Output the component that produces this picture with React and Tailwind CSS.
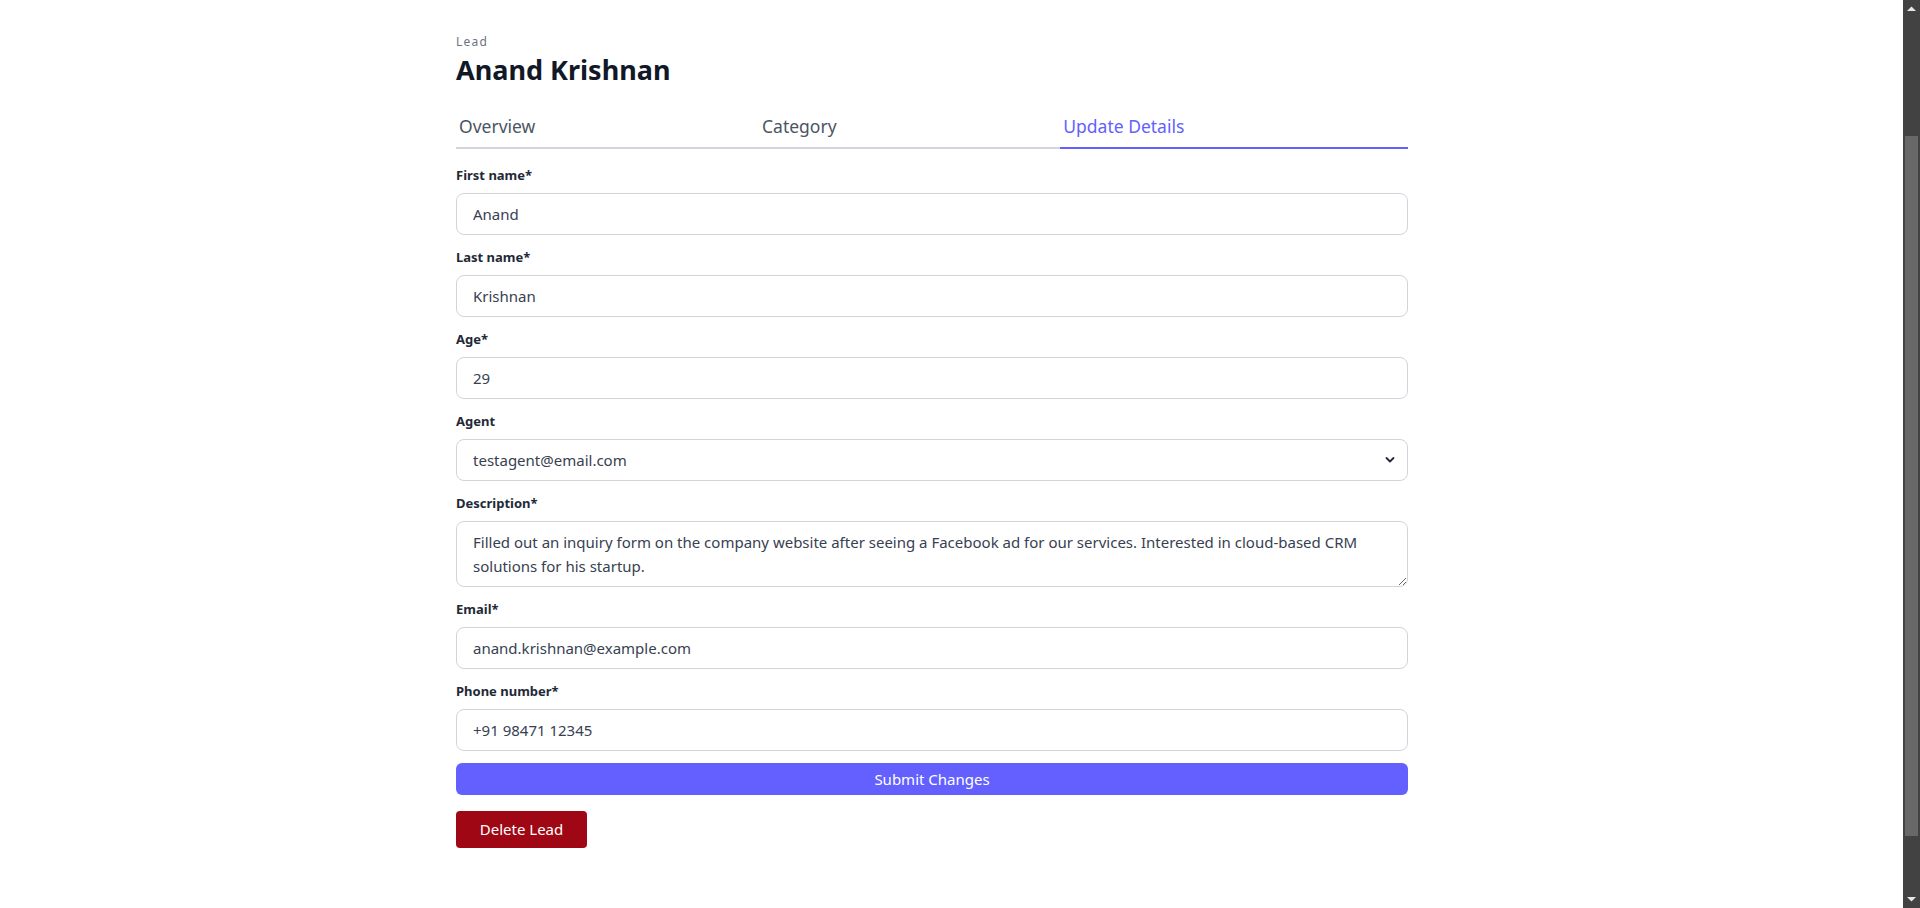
import React from "react";

const fields = [
  { label: "First name*", value: "Anand" },
  { label: "Last name*", value: "Krishnan" },
  { label: "Age*", value: "29" },
];

function Label({ children }) {
  return <label className="block text-[13px] leading-5 font-bold text-[#1f2937]">{children}</label>;
}

function TextInput({ value }) {
  return (
    <input
      readOnly
      value={value}
      className="mt-2 block w-full h-[42px] rounded-lg border border-[#d1d5db] bg-white px-4 text-[15px] leading-6 text-[#374151] outline-none"
    />
  );
}

function Scrollbar() {
  return (
    <div className="flex w-[17px] shrink-0 flex-col bg-[#424242]">
      <div className="flex h-[17px] items-center justify-center">
        <svg width="9" height="5" viewBox="0 0 9 5">
          <polygon points="0,5 4.5,0.5 9,5" fill="#e6e6e6" />
        </svg>
      </div>
      <div className="flex-1 pt-[119px]">
        <div className="mx-[2px] h-[700px] bg-[#686868]" />
      </div>
      <div className="flex h-[17px] items-center justify-center">
        <svg width="9" height="5" viewBox="0 0 9 5">
          <polygon points="0,0 4.5,4.5 9,0" fill="#e6e6e6" />
        </svg>
      </div>
    </div>
  );
}

export default function App() {
  return (
    <div
      className="flex h-[908px] overflow-hidden bg-white text-[#374151]"
      style={{ fontFamily: '"Noto Sans", "Open Sans", sans-serif' }}
    >
      <div className="flex-1">
        <div className="ml-[456px] w-[952px] pt-[34px]">
          <div className="text-xs leading-4 tracking-widest text-[#6b7280]">Lead</div>
          <h1 className="mt-[2px] text-[27px] leading-9 font-bold text-[#111827]">Anand Krishnan</h1>

          <div className="mt-6 flex">
            <button className="flex-auto text-left px-[3px] pb-[7px] border-b-2 border-[#d1d5db] text-[17.5px] leading-7 text-[#4b5563]">
              Overview
            </button>
            <button className="flex-auto text-left px-[3px] pb-[7px] border-b-2 border-[#d1d5db] text-[17.5px] leading-7 text-[#4b5563]">
              Category
            </button>
            <button className="flex-auto text-left px-[3px] pb-[7px] border-b-2 border-[#6360ff] text-[17.5px] leading-7 text-[#6360ff]">
              Update Details
            </button>
          </div>

          <form className="mt-4 flex flex-col">
            {fields.map((f) => (
              <div key={f.label} className="mb-3">
                <Label>{f.label}</Label>
                <TextInput value={f.value} />
              </div>
            ))}

            <div className="mb-3">
              <Label>Agent</Label>
              <div className="relative mt-2">
                <select
                  defaultValue="testagent@email.com"
                  className="block w-full h-[42px] appearance-none rounded-lg border border-[#d1d5db] bg-white px-4 text-[15px] leading-6 text-[#374151] outline-none"
                >
                  <option>testagent@email.com</option>
                </select>
                <svg
                  className="pointer-events-none absolute right-[13px] top-[17px]"
                  width="10"
                  height="8"
                  viewBox="0 0 10 8"
                  fill="none"
                >
                  <path d="M1.5 2L5 5.5L8.5 2" stroke="#1f2937" strokeWidth="1.8" strokeLinecap="round" strokeLinejoin="round" />
                </svg>
              </div>
            </div>

            <div className="mb-3">
              <Label>Description*</Label>
              <textarea
                readOnly
                rows={2}
                value="Filled out an inquiry form on the company website after seeing a Facebook ad for our services. Interested in cloud-based CRM solutions for his startup."
                className="mt-2 block w-full h-[66px] rounded-lg border border-[#d1d5db] bg-white px-4 py-2 text-[15px] leading-6 text-[#374151] outline-none"
              />
            </div>

            <div className="mb-3">
              <Label>Email*</Label>
              <TextInput value="anand.krishnan@example.com" />
            </div>

            <div className="mb-3">
              <Label>Phone number*</Label>
              <TextInput value="+91 98471 12345" />
            </div>

            <button
              type="button"
              className="h-8 w-full rounded-md bg-[#6360ff] text-[15px] text-white"
            >
              Submit Changes
            </button>
          </form>

          <button
            type="button"
            className="mt-4 h-[37px] w-[131px] rounded-[4px] bg-[#a00714] text-[15px] text-white"
          >
            Delete Lead
          </button>
        </div>
      </div>
      <Scrollbar />
    </div>
  );
}
